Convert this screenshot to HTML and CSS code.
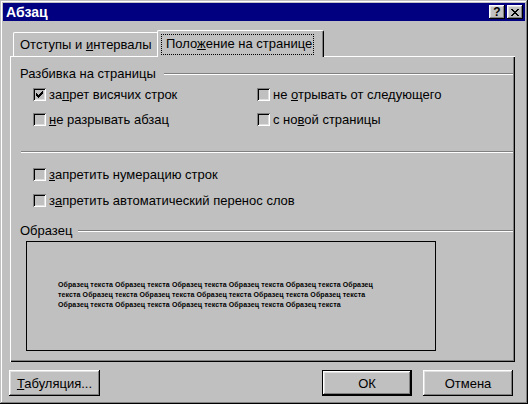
FILE: index.html
```html
<!DOCTYPE html>
<html lang="ru">
<head>
<meta charset="utf-8">
<title>Абзац</title>
<link rel="stylesheet" href="styles.css">
</head>
<body>
<div class="window">
  <div class="titlebar">
    <span class="title">Абзац</span>
    <div class="tbuttons">
      <span class="tbtn help">?</span>
      <span class="tbtn close"><svg width="8" height="7" viewBox="0 0 8 7" shape-rendering="crispEdges"><path d="M0 0h2v1h-2zM6 0h2v1h-2zM1 1h2v1h-2zM5 1h2v1h-2zM2 2h4v1h-4zM3 3h2v1h-2zM2 4h4v1h-4zM1 5h2v1h-2zM5 5h2v1h-2zM0 6h2v1h-2zM6 6h2v1h-2z" fill="#000"/></svg></span>
    </div>
  </div>
  <div class="content">
    <div class="tabs">
      <div class="tab">Отступы и <u>и</u>нтервалы</div>
      <div class="tab active"><span class="focus">Поло<u>ж</u>ение на странице</span></div>
    </div>
    <div class="panel">
      <div class="legend legend-first"><span>Разбивка на страницы</span><div class="etch"></div></div>
      <div class="grid">
        <label class="check"><span class="box"><svg width="7" height="7" viewBox="0 0 7 7" shape-rendering="crispEdges"><path d="M6 0h1v1h-1zM5 1h2v1h-2zM0 2h1v1h-1zM4 2h3v1h-3zM0 3h2v1h-2zM3 3h3v1h-3zM0 4h5v1h-5zM1 5h3v1h-3zM2 6h1v1h-1z" fill="#000"/></svg></span><span class="lbl">за<u>п</u>рет висячих строк</span></label>
        <label class="check"><span class="box"></span><span class="lbl">не <u>о</u>трывать от следующего</span></label>
        <label class="check"><span class="box"></span><span class="lbl"><u>н</u>е разрывать абзац</span></label>
        <label class="check"><span class="box"></span><span class="lbl">с но<u>в</u>ой страницы</span></label>
      </div>
      <div class="etch sep"></div>
      <div class="list">
        <label class="check"><span class="box"></span><span class="lbl"><u>з</u>апретить нумерацию строк</span></label>
        <label class="check"><span class="box"></span><span class="lbl">з<u>а</u>претить автоматический перенос слов</span></label>
      </div>
      <div class="legend legend-second"><span>Образец</span><div class="etch"></div></div>
      <div class="preview">
        <p>Образец текста Образец текста Образец текста Образец текста Образец текста Образец<br>текста Образец текста Образец текста Образец текста Образец текста Образец текста<br>Образец текста Образец текста Образец текста Образец текста Образец текста</p>
      </div>
    </div>
    <div class="buttons">
      <button class="btn tabs-btn"><u>Т</u>абуляция...</button>
      <div class="right">
        <button class="btn default">ОК</button>
        <button class="btn">Отмена</button>
      </div>
    </div>
  </div>
</div>
</body>
</html>
```
FILE: styles.css
```css
* { box-sizing: border-box; }
html, body { margin: 0; padding: 0; background: #c0c0c0; }
body {
  width: 528px;
  height: 404px;
  font-family: "Liberation Sans", Arial, sans-serif;
  font-size: 13px;
  color: #000;
  -webkit-font-smoothing: none;
}
u { text-decoration: underline; text-underline-offset: 1px; }

.window {
  width: 528px;
  height: 404px;
  padding: 3px;
  background: #c0c0c0;
  box-shadow: inset -1px -1px #000, inset 1px 1px #c0c0c0, inset -2px -2px #808080, inset 2px 2px #fff;
}

.titlebar {
  height: 18px;
  background: #000080;
  display: flex;
  align-items: center;
  justify-content: space-between;
  padding: 0 2px 0 3px;
}
.title {
  color: #fff;
  font-weight: bold;
  font-size: 14px;
  line-height: 18px;
}
.tbuttons { display: flex; gap: 2px; }
.tbtn {
  width: 16px;
  height: 14px;
  background: #c0c0c0;
  box-shadow: inset -1px -1px #000, inset 1px 1px #fff, inset -2px -2px #808080, inset 2px 2px #dfdfdf;
  display: flex;
  align-items: center;
  justify-content: center;
}
.help {
  font-weight: bold;
  font-size: 12px;
  line-height: 14px;
  padding-bottom: 1px;
}
.close svg { display: block; margin-left: -1px; }

.content { padding: 9px 10px 0 7px; }

.tabs {
  display: flex;
  align-items: flex-end;
  height: 26px;
  padding-left: 3px;
}
.tab {
  height: 24px;
  width: 144px;
  padding: 4px 0 0 6px;
  line-height: 15px;
  border-top: 1px solid #fff;
  border-left: 1px solid #fff;
  border-radius: 2px 0 0 0;
  white-space: nowrap;
}
.tab.active {
  position: relative;
  z-index: 1;
  width: 167px;
  height: 27px;
  margin-bottom: -1px;
  padding: 3px 0 0 3px;
  border-right: 1px solid #000;
  border-radius: 2px 2px 0 0;
  background: #c0c0c0;
  box-shadow: inset -1px 0 #808080;
}
.focus {
  display: block;
  width: 153px;
  height: 21px;
  padding: 2px 0 0 5px;
  outline: 1px dotted #000;
  outline-offset: -1px;
}

.panel {
  height: 306px;
  padding: 0 2px 0 9px;
  border-top: 1px solid #fff;
  border-left: 1px solid #fff;
  box-shadow: inset -1px -1px #000, inset -2px -2px #808080;
}

.legend {
  display: flex;
  align-items: flex-start;
  line-height: 15px;
  white-space: nowrap;
}
.legend-first { margin-top: 9px; }
.legend .etch { flex: 1; margin: 7px 0 0 8px; }
.legend-second .etch { margin-left: 6px; }

.etch {
  height: 2px;
  border-top: 1px solid #808080;
  border-bottom: 1px solid #fff;
}

.grid {
  display: grid;
  grid-template-columns: 224px 1fr;
  row-gap: 8px;
  margin: 5px 0 0 13px;
}
.check {
  display: flex;
  align-items: center;
  gap: 3px;
  height: 17px;
  line-height: 15px;
  white-space: nowrap;
}
.box {
  width: 13px;
  height: 13px;
  flex: none;
  background: #c0c0c0;
  box-shadow: inset 1px 1px #808080, inset -1px -1px #fff, inset 2px 2px #000, inset -2px -2px #dfdfdf;
  display: flex;
  align-items: center;
  justify-content: center;
}
.box svg { display: block; }

.sep { margin: 23px 0 0 1px; }

.list {
  display: flex;
  flex-direction: column;
  gap: 9px;
  margin: 13px 0 0 13px;
}
.legend-second { margin-top: 14px; }

.preview {
  width: 410px;
  height: 110px;
  margin: 3px 0 0 6px;
  border: 1px solid #000;
  padding: 38px 0 0 31px;
}
.preview p {
  margin: 0;
  font-size: 7px;
  font-weight: bold;
  line-height: 10px;
  letter-spacing: 0.1px;
  white-space: nowrap;
}

.buttons {
  display: flex;
  justify-content: space-between;
  margin: 8px 2px 0 -1px;
}
.right { display: flex; gap: 11px; }
.btn {
  height: 26px;
  width: 90px;
  font: inherit;
  font-size: 13px;
  color: #000;
  background: #c0c0c0;
  border: 0;
  padding: 0;
  box-shadow: inset -1px -1px #000, inset 1px 1px #fff, inset -2px -2px #808080, inset 2px 2px #dfdfdf;
}
.tabs-btn { width: 91px; }
.btn.default {
  box-shadow: inset 0 0 0 1px #000, inset -2px -2px #000, inset 2px 2px #fff, inset -3px -3px #808080, inset 3px 3px #dfdfdf;
}
```
